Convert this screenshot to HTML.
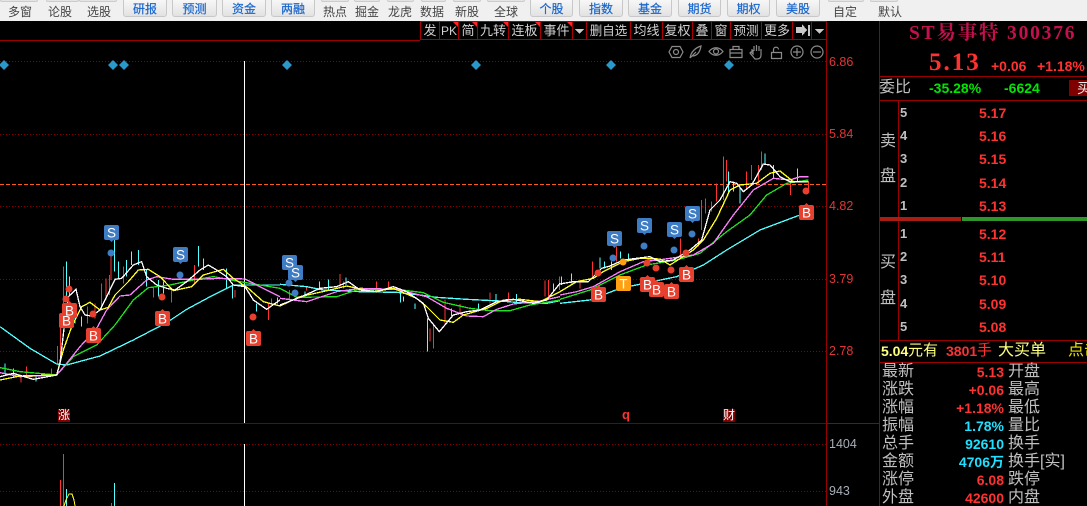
<!DOCTYPE html>
<html><head><meta charset="utf-8"><style>
html,body{margin:0;padding:0;background:#000}
#p{position:relative;width:1087px;height:506px;overflow:hidden;background:#000;font-family:"Liberation Sans","Noto Sans CJK SC",sans-serif}
#p div{position:absolute;white-space:nowrap}
.t{top:5px;font-size:12px;line-height:14px;color:#444}
.b{top:-3px;height:20px;background:linear-gradient(#fafafa,#e2e2e2);border:1px solid #c8c8c8;border-radius:3px;box-sizing:border-box;color:#1866cc;font-size:12px;line-height:22px;text-align:center;-webkit-text-stroke:.2px #1866cc}
.m{top:-4px;height:6px;background:#e4e4e4;border:1px solid #ccc;border-radius:2px;box-sizing:border-box}
.k{top:21px;height:19px;border:1px solid #a80000;box-sizing:border-box;color:#d0d0d0;font-size:13px;line-height:18px;text-align:center;overflow:hidden}
.c:after{content:"";position:absolute;right:0;top:0;border-top:5px solid #f22;border-left:5px solid transparent}
.a{left:829px;font-size:12.5px;line-height:14px;color:#e23636}
.l{left:900px;font-size:13px;font-weight:bold;color:#c0c0c0;line-height:14px}
.v{left:979px;font-size:14px;font-weight:bold;color:#ff3232;line-height:14px}
.z{font-size:16px;line-height:18px;color:#c0c0c0}
.n{font-size:14px;font-weight:bold;line-height:18px;right:83px}
</style></head><body><div id="p">
<div style="left:0;top:0;width:1087px;height:21px;background:#f0f0f0"></div>
<div class="m" style="left:0;width:38px"></div><div class="m" style="left:46px;width:33px"></div><div class="m" style="left:79px;width:38px"></div>
<div class="m" style="left:321px;width:28px"></div><div class="m" style="left:354px;width:26px"></div><div class="m" style="left:387px;width:27px"></div><div class="m" style="left:421px;width:25px"></div><div class="m" style="left:453px;width:28px"></div><div class="m" style="left:487px;width:38px"></div><div class="m" style="left:828px;width:36px"></div><div class="m" style="left:870px;width:28px"></div>
<div class="t" style="left:8px">多窗</div><div class="t" style="left:48px">论股</div><div class="t" style="left:87px">选股</div>
<div class="b" style="left:123px;width:44px">研报</div><div class="b" style="left:172px;width:45px">预测</div><div class="b" style="left:222px;width:44px">资金</div><div class="b" style="left:271px;width:44px">两融</div>
<div class="t" style="left:323px">热点</div><div class="t" style="left:355px">掘金</div><div class="t" style="left:388px">龙虎</div><div class="t" style="left:420px">数据</div><div class="t" style="left:455px">新股</div><div class="t" style="left:494px">全球</div>
<div class="b" style="left:530px;width:43px">个股</div><div class="b" style="left:579px;width:44px">指数</div><div class="b" style="left:628px;width:44px">基金</div><div class="b" style="left:678px;width:43px">期货</div><div class="b" style="left:727px;width:43px">期权</div><div class="b" style="left:776px;width:44px">美股</div>
<div class="t" style="left:833px;top:5px">自定</div><div class="t" style="left:878px;top:5px">默认</div>

<div style="left:0;top:40px;width:420px;height:1px;background:#900"></div>
<div class="k" style="left:420px;width:20px">发</div>
<div class="k c" style="left:439px;width:20px;font-size:12px">PK</div>
<div class="k c" style="left:458px;width:20px">简</div>
<div class="k c" style="left:477px;width:32px">九转</div>
<div class="k c" style="left:508px;width:33px">连板</div>
<div class="k c" style="left:540px;width:33px">事件</div>
<div class="k" style="left:572px;width:15px"></div>
<div class="k" style="left:586px;width:45px;font-size:12.500px">删自选</div>
<div class="k" style="left:630px;width:33px">均线</div>
<div class="k" style="left:662px;width:31px">复权</div>
<div class="k" style="left:692px;width:20px">叠</div>
<div class="k" style="left:711px;width:20px">窗</div>
<div class="k" style="left:730px;width:32px;font-size:12.500px">预测</div>
<div class="k" style="left:761px;width:32px">更多</div>
<div class="k" style="left:792px;width:20px"></div>
<div class="k" style="left:811px;width:16px"></div>

<svg style="position:absolute;left:0;top:0" width="1087" height="506" viewBox="0 0 1087 506" fill="none">
<g fill="#c8c8c8" shape-rendering="crispEdges">
<path d="M575 29h9l-4.500 5z"/><path d="M815 29h9l-4.500 5z"/>
<path d="M796 27h6v-3l5 6-5 6v-3h-6zM808 25h2v11h-2z"/>
</g>
<g stroke="#8a0000" stroke-dasharray="1 2" shape-rendering="crispEdges">
<path d="M0 61.500H826M0 134.500H826M0 206.500H826M0 279.500H826M0 351.500H826M0 444.500H826M0 491.500H826"/>
</g>
<path d="M0 184.500H826" stroke="#ff5a1e" stroke-dasharray="4 2" shape-rendering="crispEdges"/>
<path d="M0 423.500H826" stroke="#7a0000" shape-rendering="crispEdges"/>
<path d="M826.500 21V506M879.500 21V506M898.500 100V340M826 423.500H879M879 76.500H1087M879 100.500H1087M879 340.500H1087M879 362.500H1087" stroke="#900" shape-rendering="crispEdges"/>
<path d="M880 219H961" stroke="#a81e14" stroke-width="4" shape-rendering="crispEdges"/>
<path d="M962 219H1087" stroke="#2f962a" stroke-width="4" shape-rendering="crispEdges"/>
<path d="M244.500 61V423M244.500 444V506" stroke="#fff" shape-rendering="crispEdges"/>

<g fill="#2a98c8">
<path d="M4 60l5 5-5 5-5-5zM113 60l5 5-5 5-5-5zM124 60l5 5-5 5-5-5zM287 60l5 5-5 5-5-5zM476 60l5 5-5 5-5-5zM611 60l5 5-5 5-5-5zM729 60l5 5-5 5-5-5z"/>
</g>

<g stroke="#8a8a8a" stroke-width="1.200">
<circle cx="676" cy="52" r="2.500"/><path d="M672 46.500h8l3 5.500-3 5.500h-8l-3-5.500z"/>
<path d="M690 58c1-6 5-10 11-12-1 6-4 10-9 10M690 58l6-6"/>
<path d="M709 51.500c4-5 10-5 14 0-4 5-10 5-14 0z"/><circle cx="716" cy="51.500" r="2.500"/>
<path d="M730 49.500h12v8h-12zM733 49.500v-3h6v3M730 53h12"/>
<path d="M752 52v-3M754 51v-5M756.500 51v-6M759 51v-5M761 52v-3M761 49v6c0 3-2 4-4 4h-2l-5-6 1-1 2 2v-4"/>
<path d="M771.500 52.500h10v6h-10zM773.500 52.500v-3c0-3 5-3 5 0"/>
<circle cx="797" cy="52" r="6"/><path d="M793 52h8M797 48v8"/>
<circle cx="817" cy="52" r="6"/><path d="M813 52h8"/>
</g>

<!-- candles + MAs left -->
<g transform="translate(0,220) scale(.33333)" shape-rendering="crispEdges">
<path stroke-width="3" stroke="#ff3232" d="M190 140V260M182 320V420M172 378V430M155 445V465M80 440V470M63 470V488M262 260V310M285 250V295M305 190V265M318 175V240M328 165V225M333 110V180M370 140V190M515 205V248M460 200V232M583 135V190M805 250V300M815 235V255M705 210V232"/>
<path stroke-width="3" stroke="#54ffff" d="M200 125V240M208 170V230M343 60V155M355 125V175M380 120V170M395 95V135M415 90V135M440 150V200M475 180V230M490 185V220M595 78V140M610 115V150M680 145V205M698 190V235M770 250V275M832 232V250M15 430V460M40 445V470M108 468V485M245 290V320M225 280V310"/>
<polyline stroke-width="4" stroke="#54ffff" points="0,320 90,385 170,432 200,435 300,408 400,360 500,308 560,268 640,225 700,195 840,195"/>
<polyline stroke-width="4" stroke="#20e020" points="0,443 60,455 170,465 220,410 290,375 345,315 400,240 445,203 510,195 590,178 640,170 720,185 840,205"/>
<polyline stroke-width="4" stroke="#ff80ff" points="0,458 60,470 170,465 200,430 240,380 290,325 320,270 360,228 390,225 440,180 470,170 520,178 590,178 660,175 735,177 780,200 840,230"/>
<polyline stroke-width="4" stroke="#ffff20" points="0,480 60,468 170,465 190,390 215,320 245,260 270,247 300,270 325,262 345,225 385,185 415,150 445,148 480,170 520,212 575,200 610,165 670,148 700,175 745,205 790,245 840,258"/>
<polyline stroke-width="4" stroke="#fff" points="0,470 40,460 100,478 170,465 180,430 195,300 205,230 228,208 240,260 255,285 275,288 300,270 320,230 345,178 365,175 400,135 425,125 440,170 470,195 500,205 525,210 560,185 600,150 625,135 650,150 680,170 700,195 735,200 760,240 800,268 840,240"/>
</g>
<g transform="translate(280,240) scale(.33333)" shape-rendering="crispEdges">
<path stroke-width="3" stroke="#ff3232" d="M180 102V140M190 125V145M290 125V150M325 125V145M450 265V305M460 255V325M495 178V250M540 192V220M630 158V190M685 158V185M795 122V170M805 120V175M838 110V150M80 138V152M28 150V180"/>
<path stroke-width="3" stroke="#54ffff" d="M442 235V335M145 118V150M118 125V150M198 112V135M362 155V188M370 170V185M405 190V207M515 205V228M595 190V210M648 162V180M710 162V185M820 130V155M75 155V170"/>
<polyline stroke-width="4" stroke="#54ffff" points="0,133 80,140 130,150 240,155 350,157 420,165 470,172 560,178 660,183 720,188 800,190 840,182"/>
<polyline stroke-width="4" stroke="#20e020" points="0,145 50,172 170,170 230,150 350,148 430,158 490,187 570,205 630,212 690,212 750,195 840,180"/>
<polyline stroke-width="4" stroke="#ff80ff" points="0,175 80,185 170,155 240,145 350,148 440,170 500,205 560,228 610,230 650,208 700,192 780,183 840,170"/>
<polyline stroke-width="4" stroke="#ffff20" points="0,198 60,170 150,150 200,138 280,155 340,145 410,175 440,200 480,240 520,247 550,225 620,205 670,180 720,178 780,185 840,155"/>
<polyline stroke-width="4" stroke="#fff" points="0,195 60,172 120,145 170,140 205,125 240,150 290,155 340,140 380,155 430,190 445,235 478,275 520,225 560,215 600,210 650,185 700,178 760,190 800,180 840,130"/>
</g>
<g transform="translate(560,140) scale(.33333)" shape-rendering="crispEdges">
<path stroke-width="3" stroke="#ff3232" d="M490 50V180M470 130V185M425 180V270M437 175V220M455 185V215M500 60V125M560 95V145M605 35V90M595 75V130M575 75V120M170 320V365M97 365V410M60 420V445M415 295V320M362 295V345M692 130V165M745 125V155"/>
<path stroke-width="3" stroke="#54ffff" d="M505 95V160M540 140V190M520 125V155M615 40V75M712 85V125M640 75V115M35 400V430M5 410V435M120 352V385M133 365V385M155 365V390M182 335V355M205 340V360M300 355V370"/>
<polyline stroke-width="4" stroke="#54ffff" points="0,490 90,480 180,445 350,410 430,375 500,330 600,270 720,225"/>
<polyline stroke-width="4" stroke="#20e020" points="0,478 90,450 180,405 260,375 350,360 420,340 500,275 570,225 620,165 680,130 745,120"/>
<polyline stroke-width="4" stroke="#ff80ff" points="0,465 50,455 100,440 180,395 250,365 310,358 400,345 460,310 520,225 580,150 640,115 690,120 720,110 745,110"/>
<polyline stroke-width="4" stroke="#ffff20" points="0,455 50,425 100,415 130,395 190,365 240,355 300,357 330,375 400,330 430,300 470,235 510,150 540,135 590,130 630,100 660,93 700,125 745,125"/>
<polyline stroke-width="4" stroke="#fff" points="0,432 40,425 85,425 125,385 150,378 190,360 270,350 300,365 340,360 390,330 425,300 450,210 480,180 510,125 530,130 550,155 575,135 610,72 630,75 660,110 690,125 740,125"/>
</g>

<!-- volume -->
<g shape-rendering="crispEdges">
<path d="M63.500 454V506M60.500 480V506M111.500 503V506" stroke="#ff3232"/>
<path d="M66.500 489V506M114.500 483V506" stroke="#54ffff"/>
<path d="M64 506L66 500 69 494 72 494 74 500 75 506" stroke="#ffff20"/>
</g>

<!-- dots -->
<g fill="#e8402f"><circle cx="69" cy="289" r="3.500"/><circle cx="66" cy="299" r="3.500"/><circle cx="93" cy="314" r="3.500"/><circle cx="162" cy="297" r="3.500"/><circle cx="253" cy="317" r="3.500"/><circle cx="598" cy="273" r="3.500"/><circle cx="647" cy="263" r="3.500"/><circle cx="656" cy="268" r="3.500"/><circle cx="671" cy="270" r="3.500"/><circle cx="686" cy="253" r="3.500"/><circle cx="806" cy="191" r="3.500"/></g>
<g fill="#3e7cc4"><circle cx="111" cy="253" r="3.500"/><circle cx="180" cy="275" r="3.500"/><circle cx="289" cy="283" r="3.500"/><circle cx="295" cy="293" r="3.500"/><circle cx="613" cy="258" r="3.500"/><circle cx="644" cy="246" r="3.500"/><circle cx="674" cy="250" r="3.500"/><circle cx="692" cy="234" r="3.500"/></g>
<circle cx="623" cy="262" r="3.500" fill="#ffa010"/>

<!-- badges -->
<g font-family="Liberation Sans, sans-serif" font-size="13.500" text-anchor="middle" fill="#fff">
<g fill="#e8402f">
<rect x="59" y="313" width="15" height="15" rx="2"/><rect x="62" y="303" width="15" height="15" rx="2"/><rect x="86" y="328" width="15" height="15" rx="2"/><rect x="155" y="311" width="15" height="15" rx="2"/><rect x="246" y="331" width="15" height="15" rx="2"/><rect x="591" y="287" width="15" height="15" rx="2"/><rect x="640" y="277" width="15" height="15" rx="2"/><rect x="649" y="282" width="15" height="15" rx="2"/><rect x="664" y="284" width="15" height="15" rx="2"/><rect x="679" y="267" width="15" height="15" rx="2"/><rect x="799" y="205" width="15" height="15" rx="2"/>
<path d="M69.500 301l2 2h-4zM93.500 326l2 2h-4zM162.500 309l2 2h-4zM253.500 329l2 2h-4zM598.500 285l2 2h-4zM647.500 275l2 2h-4zM656.500 280l2 2h-4zM671.500 282l2 2h-4zM686.500 265l2 2h-4zM806.500 203l2 2h-4z"/>
</g>
<rect x="616" y="276" width="15" height="15" rx="2" fill="#ffa010"/>
<g fill="#3e7cc4">
<rect x="104" y="225" width="15" height="15" rx="2"/><rect x="173" y="247" width="15" height="15" rx="2"/><rect x="282" y="255" width="15" height="15" rx="2"/><rect x="288" y="265" width="15" height="15" rx="2"/><rect x="607" y="231" width="15" height="15" rx="2"/><rect x="637" y="218" width="15" height="15" rx="2"/><rect x="667" y="222" width="15" height="15" rx="2"/><rect x="685" y="206" width="15" height="15" rx="2"/>
<path d="M109.500 240h4l-2 2zM178.500 262h4l-2 2zM293.500 280h4l-2 2zM612.500 246h4l-2 2zM642.500 233h4l-2 2zM672.500 237h4l-2 2zM690.500 221h4l-2 2z"/>
</g>
<text x="66.500" y="325.500">B</text><text x="69.500" y="315.500">B</text><text x="93.500" y="340.500">B</text><text x="162.500" y="323.500">B</text><text x="253.500" y="343.500">B</text><text x="598.500" y="299.500">B</text><text x="647.500" y="289.500">B</text><text x="656.500" y="294.500">B</text><text x="671.500" y="296.500">B</text><text x="686.500" y="279.500">B</text><text x="806.500" y="217.500">B</text><text x="623.500" y="288.500">T</text>
<text x="111.500" y="237.500">S</text><text x="180.500" y="259.500">S</text><text x="289.500" y="267.500">S</text><text x="295.500" y="277.500">S</text><text x="614.500" y="243.500">S</text><text x="644.500" y="230.500">S</text><text x="674.500" y="234.500">S</text><text x="692.500" y="218.500">S</text>
</g>
</svg>

<div class="a" style="top:55px">6.86</div><div class="a" style="top:127px">5.84</div><div class="a" style="top:199px">4.82</div><div class="a" style="top:272px">3.79</div><div class="a" style="top:344px">2.78</div>
<div class="a" style="top:437px;color:#a6aeb6">1404</div><div class="a" style="top:484px;color:#a6aeb6">943</div>

<div style="left:58px;top:409px;width:12px;height:13px;background:#800000;color:#fff;font-size:12px;line-height:13px;text-align:center">涨</div>
<div style="left:622px;top:408px;font-size:13px;font-weight:bold;color:#ff3232;line-height:14px">q</div>
<div style="left:723px;top:409px;width:12px;height:13px;background:#800000;color:#fff;font-size:12px;line-height:13px;text-align:center">财</div>

<div style="left:909px;top:23px;font-family:'Liberation Serif','Noto Serif CJK SC',serif;font-weight:bold;font-size:19.500px;line-height:22px;color:#c4104e;letter-spacing:1.800px">ST易事特 300376</div>
<div style="left:929px;top:49px;font-family:'Liberation Serif',serif;font-weight:bold;font-size:25px;line-height:28px;color:#ff3232;letter-spacing:2px">5.13</div>
<div style="left:991px;top:59px;font-size:14px;font-weight:bold;line-height:15px;color:#ff3232">+0.06</div>
<div style="left:1037px;top:59px;font-size:14px;font-weight:bold;line-height:15px;color:#ff3232">+1.18%</div>

<div class="z" style="left:879px;top:79px">委比</div>
<div style="left:929px;top:81px;font-size:14px;font-weight:bold;line-height:15px;color:#00e600">-35.28%</div>
<div style="left:1004px;top:81px;font-size:14px;font-weight:bold;line-height:15px;color:#00e600">-6624</div>
<div style="left:1069px;top:80px;width:18px;height:16px;background:#800000;color:#e8e8e8;font-size:14px;line-height:16px;overflow:hidden;padding-left:8px;box-sizing:border-box">买</div>

<div class="z" style="left:880px;top:133px">卖</div><div class="z" style="left:880px;top:168px">盘</div>
<div class="z" style="left:880px;top:254px">买</div><div class="z" style="left:880px;top:290px">盘</div>

<div class="l" style="top:106px">5</div><div class="v" style="top:106px">5.17</div>
<div class="l" style="top:129px">4</div><div class="v" style="top:129px">5.16</div>
<div class="l" style="top:152px">3</div><div class="v" style="top:152px">5.15</div>
<div class="l" style="top:176px">2</div><div class="v" style="top:176px">5.14</div>
<div class="l" style="top:199px">1</div><div class="v" style="top:199px">5.13</div>
<div class="l" style="top:227px">1</div><div class="v" style="top:227px">5.12</div>
<div class="l" style="top:250px">2</div><div class="v" style="top:250px">5.11</div>
<div class="l" style="top:273px">3</div><div class="v" style="top:273px">5.10</div>
<div class="l" style="top:297px">4</div><div class="v" style="top:297px">5.09</div>
<div class="l" style="top:320px">5</div><div class="v" style="top:320px">5.08</div>

<div style="left:881px;top:343px;font-size:14px;font-weight:bold;line-height:16px;color:#ffff80">5.04</div>
<div style="left:908px;top:342px;font-size:15px;line-height:18px;color:#ffff80">元有</div>
<div style="left:946px;top:343px;font-size:14px;font-weight:bold;line-height:16px;color:#ff3232">3801</div>
<div style="left:977px;top:342px;font-size:15px;line-height:18px;color:#ff3232">手</div>
<div style="left:998px;top:342px;font-size:16px;line-height:18px;color:#ffff80">大买单</div>
<div style="left:1068px;top:342px;font-size:16px;line-height:18px;color:#e8e000">点击</div>

<div class="z" style="left:882px;top:363px">最新</div><div class="n" style="top:363px;color:#ff3232">5.13</div><div class="z" style="left:1008px;top:363px">开盘</div>
<div class="z" style="left:882px;top:381px">涨跌</div><div class="n" style="top:381px;color:#ff3232">+0.06</div><div class="z" style="left:1008px;top:381px">最高</div>
<div class="z" style="left:882px;top:399px">涨幅</div><div class="n" style="top:399px;color:#ff3232">+1.18%</div><div class="z" style="left:1008px;top:399px">最低</div>
<div class="z" style="left:882px;top:417px">振幅</div><div class="n" style="top:417px;color:#20e0ff">1.78%</div><div class="z" style="left:1008px;top:417px">量比</div>
<div class="z" style="left:882px;top:435px">总手</div><div class="n" style="top:435px;color:#20e0ff">92610</div><div class="z" style="left:1008px;top:435px">换手</div>
<div class="z" style="left:882px;top:453px">金额</div><div class="n" style="top:453px;color:#20e0ff">4706万</div><div class="z" style="left:1008px;top:453px">换手[实]</div>
<div class="z" style="left:882px;top:471px">涨停</div><div class="n" style="top:471px;color:#ff3232">6.08</div><div class="z" style="left:1008px;top:471px">跌停</div>
<div class="z" style="left:882px;top:489px">外盘</div><div class="n" style="top:489px;color:#ff3232">42600</div><div class="z" style="left:1008px;top:489px">内盘</div>
</div></body></html>
